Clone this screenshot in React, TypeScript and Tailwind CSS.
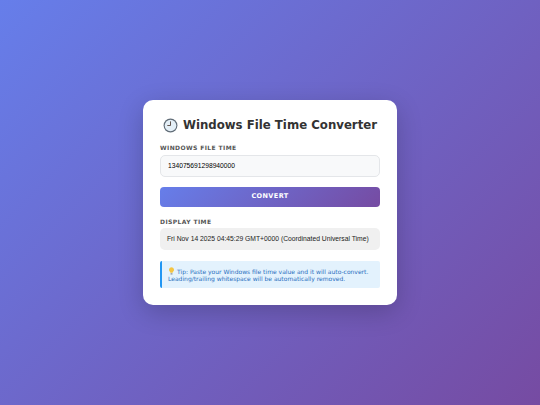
const dejavu = { fontFamily: '"DejaVu Sans", sans-serif' };

function ClockIcon() {
  return (
    <svg viewBox="0 0 16 16" className="w-[15px] h-[15px] shrink-0">
      <circle cx="8" cy="8" r="7.4" fill="#5f6b76" />
      <circle cx="8" cy="8" r="6.2" fill="#e4eff7" />
      <path d="M8 3.6V8H4.6" fill="none" stroke="#5a4a42" strokeWidth="1" />
    </svg>
  );
}

function BulbIcon() {
  return (
    <svg viewBox="0 0 10 12" className="inline-block w-[7px] h-[8px] align-[-1px] mr-[2px]">
      <path d="M5 .5a3.8 3.8 0 0 0-2.2 6.9c.4.4.6.8.6 1.3h3.2c0-.5.2-.9.6-1.3A3.8 3.8 0 0 0 5 .5z" fill="#f5c542" />
      <rect x="3.5" y="9.2" width="3" height="2.2" rx=".6" fill="#8a8f98" />
    </svg>
  );
}

export default function App() {
  return (
    <div
      className="w-[540px] h-[405px] flex items-center justify-center overflow-hidden bg-[linear-gradient(135deg,#667eea_0%,#764ba2_100%)]"
      style={dejavu}
    >
      <div className="w-[254px] h-[205px] bg-white rounded-[10px] px-[17px] pt-[17px] shadow-[0_7px_26px_rgba(0,0,0,0.2)]">
        <h1 className="flex items-center justify-center gap-[5px] text-[11.75px] leading-[16px] font-bold text-[#333] mb-[11px] whitespace-nowrap">
          <ClockIcon />
          <span>Windows File Time Converter</span>
        </h1>

        <label className="block text-[6px] leading-[8px] font-bold tracking-[0.4px] text-[#555] mb-[3px]">
          WINDOWS FILE TIME
        </label>
        <div className="h-[22px] flex items-center px-[7px] bg-[#f8f9fa] border border-[#e4e6e9] rounded-[5px] text-[6.7px] text-black font-['Liberation_Sans',sans-serif] mb-[10px]">
          134075691298940000
        </div>

        <button className="block w-full h-[20px] rounded-[4px] text-white text-[6.5px] font-bold tracking-[0.4px] bg-[linear-gradient(135deg,#667eea_0%,#764ba2_100%)] mb-[11px]">
          CONVERT
        </button>

        <label className="block text-[6px] leading-[8px] font-bold tracking-[0.4px] text-[#555] mb-[2px]">
          DISPLAY TIME
        </label>
        <div className="h-[22px] flex items-center px-[7px] bg-[#f0f0f0] rounded-[5px] text-[6.75px] text-[#222] whitespace-nowrap font-['Liberation_Sans',sans-serif] mb-[11px]">
          Fri Nov 14 2025 04:45:29 GMT+0000 (Coordinated Universal Time)
        </div>

        <div className="h-[27px] flex flex-col justify-center bg-[#e3f2fd] border-l-2 border-[#2196f3] rounded-[2px] pl-[6px] text-[6px] leading-[7px] text-[#2a6fc0] whitespace-nowrap">
          <div><BulbIcon />Tip: Paste your Windows file time value and it will auto-convert.</div>
          <div>Leading/trailing whitespace will be automatically removed.</div>
        </div>
      </div>
    </div>
  );
}
